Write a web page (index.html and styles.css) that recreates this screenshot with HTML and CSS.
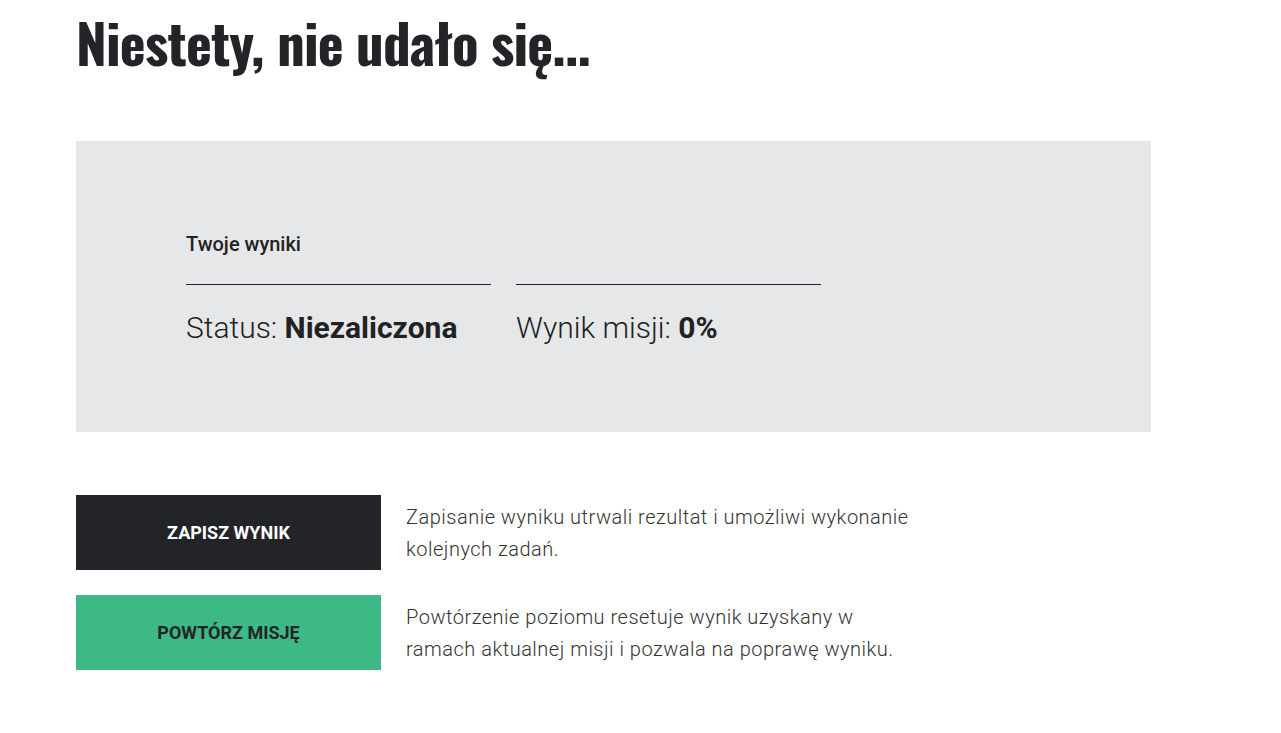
FILE: index.html
```html
<!DOCTYPE html>
<html lang="pl">
<head>
<meta charset="UTF-8" />
<meta name="viewport" content="width=device-width, initial-scale=1" />
<title>Wynik misji</title>
<link rel="stylesheet" href="styles.css">
</head>
<body>
  <main class="mission-result">
    <h1 class="title">Niestety, nie udało się...</h1>

    <section class="results-box">
      <h2 class="results-label">Twoje wyniki</h2>
      <div class="results-row">
        <div class="result-item">Status: <strong>Niezaliczona</strong></div>
        <div class="result-item">Wynik misji: <strong>0%</strong></div>
      </div>
    </section>

    <div class="actions">
      <div class="action">
        <button type="button" class="btn btn-dark">Zapisz wynik</button>
        <p class="action-desc">Zapisanie wyniku utrwali rezultat i umożliwi wykonanie kolejnych zadań.</p>
      </div>
      <div class="action">
        <button type="button" class="btn btn-green">Powtórz misję</button>
        <p class="action-desc">Powtórzenie poziomu resetuje wynik uzyskany w ramach aktualnej misji i pozwala na poprawę wyniku.</p>
      </div>
    </div>
  </main>
</body>
</html>
```

FILE: styles.css
```css
:root {
  --dark: #232428;
  --green: #3db985;
  --panel: #e6e7e9;
  --text: #222;
}
* {
  box-sizing: border-box;
}
body {
  margin: 0;
  font-family: Roboto, 'Noto Sans', sans-serif;
  color: var(--text);
  background: #fff;
}
.mission-result {
  padding: 0 130px 0 76px;
}

.title {
  margin: 0;
  padding-top: 5px;
  height: 141px;
  font-family: Oswald, 'Roboto Condensed', 'DejaVu Sans Condensed', sans-serif;
  font-weight: 700;
  font-size: 55px;
  line-height: 72px;
  letter-spacing: -0.8px;
  color: var(--dark);
}

.results-box {
  background: var(--panel);
  height: 291px;
  padding: 90px 110px 0;
}
.results-label {
  margin: 0 0 27px;
  font-size: 20px;
  font-weight: 500;
  line-height: 26px;
}
.results-row {
  display: flex;
  gap: 25px;
}
.result-item {
  width: 305px;
  border-top: 1px solid var(--dark);
  padding-top: 25px;
  font-size: 30px;
  font-weight: 300;
  line-height: 36px;
}
.result-item strong {
  font-weight: 700;
}

.actions {
  display: flex;
  flex-direction: column;
  gap: 25px;
  margin-top: 63px;
}
.action {
  display: flex;
  gap: 25px;
  align-items: flex-start;
}
.btn {
  flex: 0 0 305px;
  height: 75px;
  border: none;
  font-family: Roboto, sans-serif;
  font-size: 18px;
  font-weight: 700;
  text-transform: uppercase;
  cursor: pointer;
}
.btn-dark {
  background: var(--dark);
  color: #fff;
}
.btn-green {
  background: var(--green);
  color: var(--dark);
}
.action-desc {
  margin: 6px 0 0;
  width: 520px;
  font-size: 20px;
  font-weight: 300;
  line-height: 32px;
  letter-spacing: 0.5px;
  color: #333;
}
```
